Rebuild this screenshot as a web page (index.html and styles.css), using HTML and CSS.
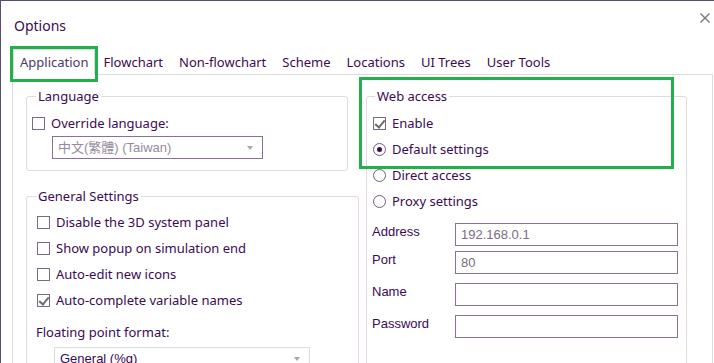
FILE: index.html
```html
<!DOCTYPE html>
<html lang="en">
<head>
  <meta charset="UTF-8">
  <title>Options</title>
  <link rel="stylesheet" href="styles.css">
</head>
<body>
  <div class="window">
    <div class="titlebar">
      <span class="title">Options</span>
      <svg class="close" width="10" height="10" viewBox="0 0 10 10"><path d="M0.5 0.5 L9.5 9.5 M9.5 0.5 L0.5 9.5" stroke="#777" stroke-width="1.4"/></svg>
    </div>

    <div class="tabs">
      <div class="tab active">Application</div>
      <div class="tab">Flowchart</div>
      <div class="tab">Non-flowchart</div>
      <div class="tab">Scheme</div>
      <div class="tab">Locations</div>
      <div class="tab">UI Trees</div>
      <div class="tab">User Tools</div>
    </div>

    <div class="panel">
      <div class="col-left">
        <fieldset class="group group-lang">
          <legend>Language</legend>
          <label class="check first"><span class="box"></span>Override language:</label>
          <div class="combo combo-disabled">中文(繁體) (Taiwan)<span class="arrow"></span></div>
        </fieldset>

        <fieldset class="group group-general">
          <legend>General Settings</legend>
          <label class="check first"><span class="box"></span>Disable the 3D system panel</label>
          <label class="check"><span class="box"></span>Show popup on simulation end</label>
          <label class="check"><span class="box"></span>Auto-edit new icons</label>
          <label class="check"><span class="box checked"></span>Auto-complete variable names</label>
          <div class="format-label">Floating point format:</div>
          <div class="combo combo-format">General (%g)<span class="arrow"></span></div>
        </fieldset>
      </div>

      <div class="col-right">
        <fieldset class="group group-web">
          <legend>Web access</legend>
          <label class="check first"><span class="box checked"></span>Enable</label>
          <label class="check"><span class="radio on"></span>Default settings</label>
          <label class="check"><span class="radio"></span>Direct access</label>
          <label class="check"><span class="radio"></span>Proxy settings</label>

          <div class="fields">
            <div class="field"><span class="field-label">Address</span><div class="input">192.168.0.1</div></div>
            <div class="field"><span class="field-label">Port</span><div class="input">80</div></div>
            <div class="field spaced"><span class="field-label">Name</span><div class="input"></div></div>
            <div class="field spaced"><span class="field-label">Password</span><div class="input"></div></div>
          </div>
        </fieldset>
      </div>
    </div>

    <!-- highlight boxes drawn over the dialog -->
    <div class="mark mark-tab"></div>
    <div class="mark mark-web"></div>
  </div>
</body>
</html>
```

FILE: styles.css
```css
* {
  box-sizing: border-box;
}
body {
  margin: 0;
  background: #fff;
  font-family: "Noto Sans", "Noto Sans CJK TC", sans-serif;
  font-size: 13px;
  color: #3b0a52;
  overflow: hidden;
}
.window {
  position: relative;
  width: 714px;
  height: 363px;
  border-left: 1px solid #5d4b6e;
  border-top: 1px solid #5d4b6e;
}
.titlebar {
  height: 48px;
  display: flex;
  align-items: center;
  justify-content: space-between;
  padding: 0 4px 0 13px;
}
.title {
  font-size: 14px;
}
.close {
  margin-top: -14px;
}
.tabs {
  display: flex;
  align-items: flex-end;
  height: 25px;
  margin-left: 12px;
  position: relative;
  z-index: 1;
}
.tab {
  height: 24px;
  line-height: 24px;
  padding: 0 8px;
}
.tab.active {
  height: 26px;
  margin-bottom: -1px;
  background: #fff;
  border: 1px solid #dcdcdc;
  border-bottom: none;
  padding: 0 6px;
  color: #4a3a66;
}
.panel {
  margin-left: 11px;
  width: 701px;
  height: 300px;
  border: 1px solid #dcdcdc;
  display: flex;
  padding: 13px 0 0 13px;
}
.col-left {
  width: 340px;
}
.group {
  margin: 0;
  padding: 0;
  border: 1px solid #e2d9e3;
  border-radius: 3px;
}
.group legend {
  padding: 0 2px;
  line-height: 16px;
}
.group-lang {
  width: 322px;
  padding: 0 0 11px 5px;
}
.group-lang legend {
  margin-left: 4px;
}
.group-general {
  width: 333px;
  margin-top: 17px;
  padding: 0 0 0 10px;
}
.group-general legend {
  margin-left: -1px;
}
.group-general .check.first {
  margin-top: 5px;
}
.group-web {
  width: 321px;
  height: 290px;
  padding: 0 0 0 6px;
}
.group-web legend {
  margin-left: 2px;
}
.check {
  display: flex;
  align-items: center;
  height: 26px;
}
.check.first {
  margin-top: 6px;
}
.box {
  width: 13px;
  height: 13px;
  border: 1px solid #7a6a88;
  margin-right: 6px;
  position: relative;
  flex: none;
}
.box.checked::after {
  content: "";
  position: absolute;
  left: 3px;
  top: 0;
  width: 4px;
  height: 8px;
  border-right: 2px solid #6f6f6f;
  border-bottom: 2px solid #6f6f6f;
  transform: rotate(40deg);
}
.radio {
  width: 13px;
  height: 13px;
  border: 1px solid #6e5d80;
  border-radius: 50%;
  margin-right: 6px;
  display: flex;
  align-items: center;
  justify-content: center;
  flex: none;
}
.radio.on::after {
  content: "";
  width: 5px;
  height: 5px;
  border-radius: 50%;
  background: #3b0a52;
}
.combo {
  position: relative;
  height: 23px;
  line-height: 21px;
  padding-left: 5px;
  font-family: "Liberation Sans", "Noto Sans CJK TC", sans-serif;
}
.combo-disabled {
  width: 211px;
  margin-left: 20px;
  border: 1px solid #8a6f96;
  color: #968a9c;
}
.combo-format {
  width: 256px;
  margin-left: 17px;
  margin-top: 6px;
  border: 1px solid #dcdcdc;
}
.arrow {
  position: absolute;
  right: 9px;
  top: 9px;
  border-left: 3px solid transparent;
  border-right: 3px solid transparent;
  border-top: 4px solid #a8a8a8;
}
.format-label {
  margin-top: 10px;
  margin-left: -1px;
  line-height: 18px;
}
.fields {
  margin-top: 9px;
}
.field {
  display: flex;
  align-items: flex-start;
  margin-bottom: 5px;
}
.field.spaced {
  margin-top: 9px;
}
.field-label {
  width: 83px;
  margin-left: -1px;
  line-height: 18px;
  font-family: "Liberation Sans", sans-serif;
}
.input {
  width: 223px;
  height: 23px;
  border: 1px solid #8a6f96;
  padding-left: 5px;
  line-height: 21px;
  color: #7a6d80;
  font-family: "Liberation Sans", sans-serif;
}
.mark {
  position: absolute;
  border: 3px solid #22b04b;
  z-index: 2;
}
.mark-tab {
  left: 9px;
  top: 45px;
  width: 88px;
  height: 36px;
}
.mark-web {
  left: 358px;
  top: 76px;
  width: 315px;
  height: 92px;
}
```
